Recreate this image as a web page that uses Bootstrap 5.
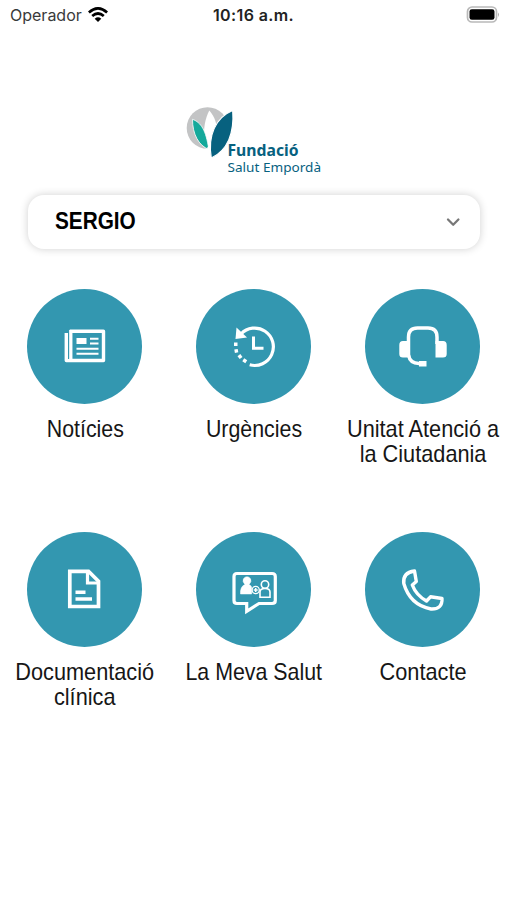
<!DOCTYPE html>
<html lang="ca">
<head>
<meta charset="utf-8">
<meta name="viewport" content="width=device-width, initial-scale=1">
<title>Fundació Salut Empordà</title>
<link href="https://cdn.jsdelivr.net/npm/bootstrap@5.3.0/dist/css/bootstrap.min.css" rel="stylesheet">
<style>
body{font-family:"Liberation Sans",Arial,sans-serif;color:#161616;background:#fff;min-height:900px;overflow:hidden}
svg{display:block}
.status{height:30px;padding:0 8px 0 10px;font-family:Inter,"Liberation Sans",sans-serif;font-size:16px;line-height:30px}
.status>*{flex:1 1 0}
.operator{color:#3a3a3a;gap:6px}
.clock{font-weight:600;color:#222;letter-spacing:.38px;padding-right:2px}
.logo{margin:70px 0 0 180px;width:150px;height:95px}
.picker{margin:0 27px 0 28px;height:54px;border-radius:16px;box-shadow:0 0 9px rgba(0,0,0,.19);padding:0 19px 2px 27px;color:#000;font-size:24px;font-weight:700}
.squeeze{display:inline-block;white-space:nowrap;transform:scaleX(.89)}
.squeeze-wide{transform:scaleX(.905)}
.picker .squeeze{transform:scaleX(.865);transform-origin:left}
.tiles{margin-top:40px;padding-left:.5px}
.tile{height:242.7px;color:inherit;text-decoration:none}
.disc{width:115px;height:115px;background:#3397b0}
.caption-text{margin-top:12px;font-size:24px;line-height:25px}
</style>
<script src="https://cdn.jsdelivr.net/npm/bootstrap@5.3.0/dist/js/bootstrap.bundle.min.js"></script>
</head>
<body>
<header class="status d-flex align-items-center">
  <div class="operator d-flex align-items-center">Operador
    <svg width="20" height="16" viewBox="0 0 20 16" fill="none" stroke="#000" stroke-width="2.7"><path d="M.9 5.4Q10-2.6 19.1 5.4M4.2 9Q10 4 15.8 9"/><path d="M6.7 11.7Q10 9 13.3 11.7L10 15Z" fill="#000" stroke="none"/></svg>
  </div>
  <div class="clock text-center">10:16 a.m.</div>
  <div class="d-flex justify-content-end"><svg width="33" height="18" viewBox="0 0 33 18"><rect x="1.500" y="1" width="29" height="15" rx="4.500" fill="#fff" stroke="#b9b9b9" stroke-width="1.700"/><rect x="3.500" y="3.200" width="25" height="10.500" rx="2.300"/><path d="M32 6.500q1.800 2 0 4.400z" fill="#aaa"/></svg></div>
</header>
<main>
  <svg class="logo" viewBox="180 100 150 95" role="img" aria-label="Fundació Salut Empordà">
    <circle cx="207.500" cy="128" r="20.800" fill="#c3c4c5"/>
    <path d="M211.500 157C203 150 201 126 209.300 110.500C215 117 217 124 217 132Z" fill="#fff"/>
    <path d="M192.500 119.300C201 122.500 206 130 208.800 149.500C198.500 145.500 192.500 134 192.500 119.300Z" fill="#14a99b" stroke="#fff" stroke-width=".800"/>
    <path d="M207 148L213 140L211.500 158.500Z" fill="#fff"/>
    <path d="M232.700 110.500C215.500 117.500 207.500 136 211.300 158C227.500 150.500 234.500 133 232.700 110.500Z" fill="#07617f" stroke="#fff" stroke-width="1.200"/>
    <g fill="#07617f" font-family="'Noto Sans','Open Sans',sans-serif">
      <text x="227.500" y="156" font-size="15.500" font-weight="700" textLength="71" lengthAdjust="spacingAndGlyphs">Fundació</text>
      <text x="227.500" y="171.500" font-size="12.500" textLength="93.500" lengthAdjust="spacingAndGlyphs">Salut Empordà</text>
    </g>
  </svg>
  <div class="picker d-flex align-items-center justify-content-between" role="button">
    <span class="squeeze">SERGIO</span>
    <svg width="16" height="12" viewBox="0 0 16 12" fill="none" stroke="#777" stroke-width="2.300" stroke-linecap="round" stroke-linejoin="round"><path d="M3 4.500l5.200 5.200L13.400 4.500"/></svg>
  </div>
  <nav class="tiles row g-0 text-center">
    <a class="tile col-4" href="#">
      <div class="disc rounded-circle mx-auto"><svg width="115" height="115" fill="none" stroke="#fff"><path d="M42.800 42.200H76.500V71.500H39.300V44" stroke-width="3.400" stroke-linejoin="round"/><path d="M43.800 41V70" stroke-width="3.300"/><path d="M41.500 47V70" stroke="#3397b0" stroke-width="1"/><path d="M49.500 49h10v6h-10z" fill="#fff" stroke="none"/><path d="M63 49.800h8.500M63 54.500h8.500M49.500 59.700h22M49.500 64.700h22" stroke-width="2"/></svg></div>
      <div class="caption-text"><span class="squeeze">Notícies</span></div>
    </a>
    <a class="tile col-4" href="#">
      <div class="disc rounded-circle mx-auto"><svg width="115" height="115" fill="none" stroke="#fff"><path d="M45 45A18.700 18.700 0 1 1 53.700 75.800" stroke-width="3.200"/><path d="M40.500 38.500L39.500 50L51 48.500Z" fill="#fff" stroke="none"/><path d="M57.500 47.500V59.300H67.500" stroke-width="3"/><g fill="#fff" stroke="none"><path d="M38 53.500h3.500v3.500H38zM38.300 60.500l3.400-.6.600 3.400-3.400.6zM41.500 67.300l2.800-2.200 2.200 2.800-2.800 2.200zM46.300 72.300l1.900-3 3 1.900-1.900 3z"/></g></svg></div>
      <div class="caption-text"><span class="squeeze">Urgències</span></div>
    </a>
    <a class="tile col-4" href="#">
      <div class="disc rounded-circle mx-auto"><svg width="115" height="115" fill="none" stroke="#fff"><path d="M43.500 68V48Q43.500 39 52.500 39H63Q72 39 72 48V55" stroke-width="3.500"/><path d="M43.500 66Q45 74.500 54 74.500H61" stroke-width="3.500"/><path d="M54 72h7.500v5.500H54z" fill="#fff" stroke="none"/><path d="M45 52h-7q-3.700 0-3.700 4v9q0 3.500 3.700 3.500h7zM70.500 52h7.500q3.700 0 3.700 4v9q0 3.500-3.700 3.500h-7.500z" fill="#fff" stroke="none"/></svg></div>
      <div class="caption-text"><span class="squeeze squeeze-wide">Unitat Atenció a<br>la Ciutadania</span></div>
    </a>
    <a class="tile col-4" href="#">
      <div class="disc rounded-circle mx-auto"><svg width="115" height="115" fill="none" stroke="#fff"><path d="M42.800 39.300H61.500L71.500 49.300V74.500H42.800Z" stroke-width="3.700"/><path d="M60.500 40V51H71" stroke-width="3.200"/><path d="M48.500 60.300h10M48.500 67h16.500" stroke-width="3.600"/></svg></div>
      <div class="caption-text"><span class="squeeze squeeze-wide">Documentació<br>clínica</span></div>
    </a>
    <a class="tile col-4" href="#">
      <div class="disc rounded-circle mx-auto"><svg width="115" height="115" fill="none" stroke="#fff"><path d="M41 41.500H76Q79.300 41.500 79.300 44.500V68.500Q79.300 71.500 76 71.500H63L50.700 79.300V71.500H41Q38 71.500 38 68.500V44.500Q38 41.500 41 41.500Z" stroke-width="3.200"/><path d="M44.500 62q-.5-7.500 4.500-9.500-3-3-1.500-5.800 1.500-2 3.500-2t3.500 2q1.500 2.800-1.500 5.800 3 1 2.700 4.500v5z" fill="#fff" stroke-width=".5"/><circle cx="69" cy="52.500" r="3.700" stroke-width="1.600"/><path d="M64 65.300V60Q64 56.500 69 56.500T74 60V65.300Z" stroke-width="1.600"/><circle cx="59.700" cy="58" r="3.600" stroke-width="1.300"/><path d="M59.700 56v4M57.700 58h4" stroke-width="1.500"/></svg></div>
      <div class="caption-text"><span class="squeeze">La Meva Salut</span></div>
    </a>
    <a class="tile col-4" href="#">
      <div class="disc rounded-circle mx-auto"><svg width="115" height="115" fill="none" stroke="#fff"><path d="M49.500 39L51.300 49.500L47.300 53Q51 63 61.500 69L65.500 64.800L77 66.500Q77.500 77.500 66 77Q45 73 38.800 51.500Q37.500 40.500 49.500 39Z" stroke-width="3.400" stroke-linejoin="round"/></svg></div>
      <div class="caption-text"><span class="squeeze squeeze-wide">Contacte</span></div>
    </a>
  </nav>
</main>
</body>
</html>
